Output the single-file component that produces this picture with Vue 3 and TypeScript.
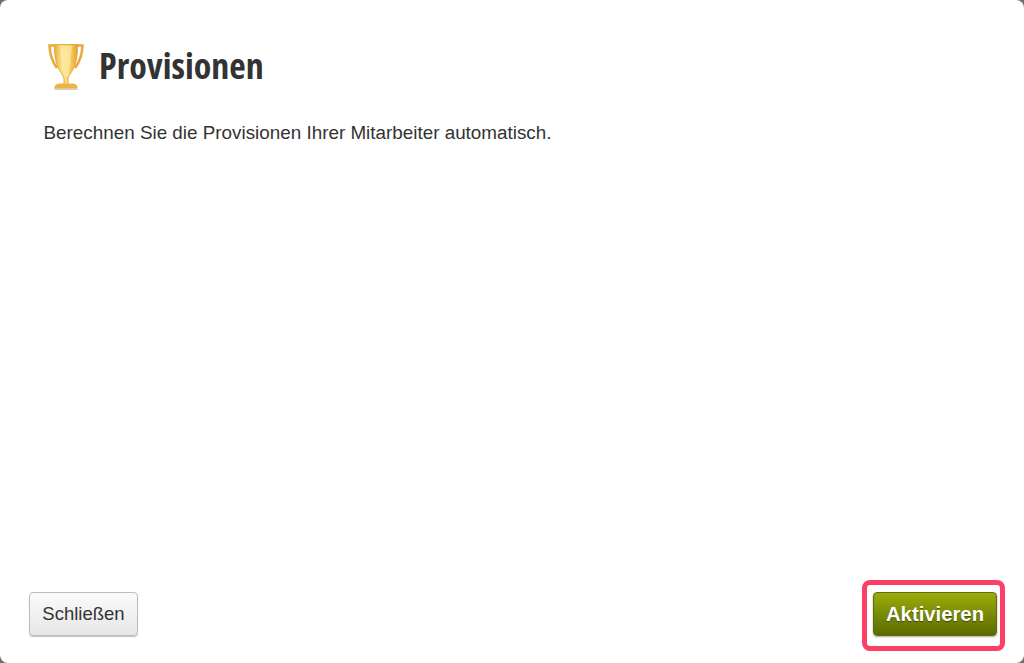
<script setup lang="ts">
const title = 'Provisionen'
const description = 'Berechnen Sie die Provisionen Ihrer Mitarbeiter automatisch.'
</script>

<template>
  <div class="modal">
    <div class="content">
      <header class="head">
        <svg class="trophy" viewBox="0 0 40 50" width="40" height="50" aria-hidden="true">
          <defs>
            <linearGradient id="cup" x1="0" y1="0" x2="1" y2="0">
              <stop offset="0" stop-color="#e9ad35" />
              <stop offset="0.3" stop-color="#fbe08c" />
              <stop offset="0.62" stop-color="#f9d871" />
              <stop offset="1" stop-color="#e3a22b" />
            </linearGradient>
            <filter id="soft" x="-10%" y="-10%" width="120%" height="120%">
              <feGaussianBlur stdDeviation="0.35" />
            </filter>
          </defs>
          <g filter="url(#soft)">
            <path d="M10 3.500H3.500c.3 8 2.200 15.500 7.500 22.500" fill="none" stroke="#e6ab3b" stroke-width="2.600" />
            <path d="M30 3.500h6.500c-.3 8-2.200 15.500-7.500 22.500" fill="none" stroke="#e6ab3b" stroke-width="2.600" />
            <path d="M8.500 2.500h23c.2 10-1.300 19-4.500 25-2.300 4.300-4.800 6-5 9.500v5.500h-4V37c-.2-3.500-2.700-5.200-5-9.500-3.200-6-4.700-15-4.500-25z" fill="url(#cup)" stroke="#e2a531" stroke-width=".9" />
            <path d="M14 4h12l-2.500 23-1.500 8h-4l-1.500-8z" fill="#fff0b8" opacity=".5" />
            <path d="M13.500 41.500h13c2.500 0 4.500 1.500 5 3.500v1.500h-23V45c.5-2 2.500-3.500 5-3.500z" fill="#edb443" />
            <rect x="8.500" y="46.500" width="23" height="1.500" fill="#a89c84" opacity=".5" />
          </g>
        </svg>
        <h1 class="title">{{ title }}</h1>
      </header>
      <p class="text">{{ description }}</p>
    </div>
    <footer class="foot">
      <button type="button" class="btn close">Schließen</button>
      <div class="marker">
        <button type="button" class="btn activate">Aktivieren</button>
      </div>
    </footer>
  </div>
</template>

<style scoped>
.modal {
  height: 663px;
  box-sizing: border-box;
  display: flex;
  flex-direction: column;
  justify-content: space-between;
  background: #fff;
  border-radius: 8px;
  font-family: "Liberation Sans", Arial, sans-serif;
  color: #333;
}
.content {
  padding: 42px 43.500px 0;
}
.head {
  display: flex;
  align-items: center;
  gap: 13px;
  margin-left: 2.500px;
}
.trophy {
  width: 40px;
  height: 50px;
  flex: none;
}
.title {
  margin: -2px 0 0;
  font-family: "Open Sans", sans-serif;
  font-stretch: 75%;
  font-weight: 700;
  font-size: 36px;
  line-height: 50px;
  color: #333;
}
.text {
  margin: 30px 0 0;
  font-size: 18.850px;
  line-height: 22px;
  color: #333;
}
.foot {
  display: flex;
  align-items: flex-start;
  justify-content: space-between;
  padding: 0 19px 12px 29px;
}
.btn {
  font-family: "Liberation Sans", Arial, sans-serif;
  border-radius: 4px;
  box-sizing: border-box;
  padding: 0;
}
.close {
  width: 109px;
  height: 44px;
  margin-top: 12px;
  font-size: 18.500px;
  color: #333;
  background: linear-gradient(#fbfbfb, #e6e6e6);
  border: 1px solid #bdbdbd;
  box-shadow: 0 1px 1px rgba(0, 0, 0, 0.25);
}
.marker {
  box-sizing: border-box;
  width: 143px;
  height: 71px;
  padding: 7px 0 0 6px;
  border: 5px solid #fb3f67;
  border-radius: 8px;
  display: flex;
  align-items: flex-start;
  background: #fff;
}
.activate {
  width: 124px;
  height: 44px;
  font-size: 20.300px;
  font-weight: 700;
  color: #fff;
  text-shadow: 0 1px 1px rgba(0, 0, 0, 0.45);
  background: linear-gradient(#99ad0a, #5c6a02);
  border: 1px solid #5d6b08;
  box-shadow: 0 1px 2px rgba(0, 0, 0, 0.35);
}
</style>

<style>
html,
body {
  margin: 0;
  background: #6f6f6f;
}
</style>
